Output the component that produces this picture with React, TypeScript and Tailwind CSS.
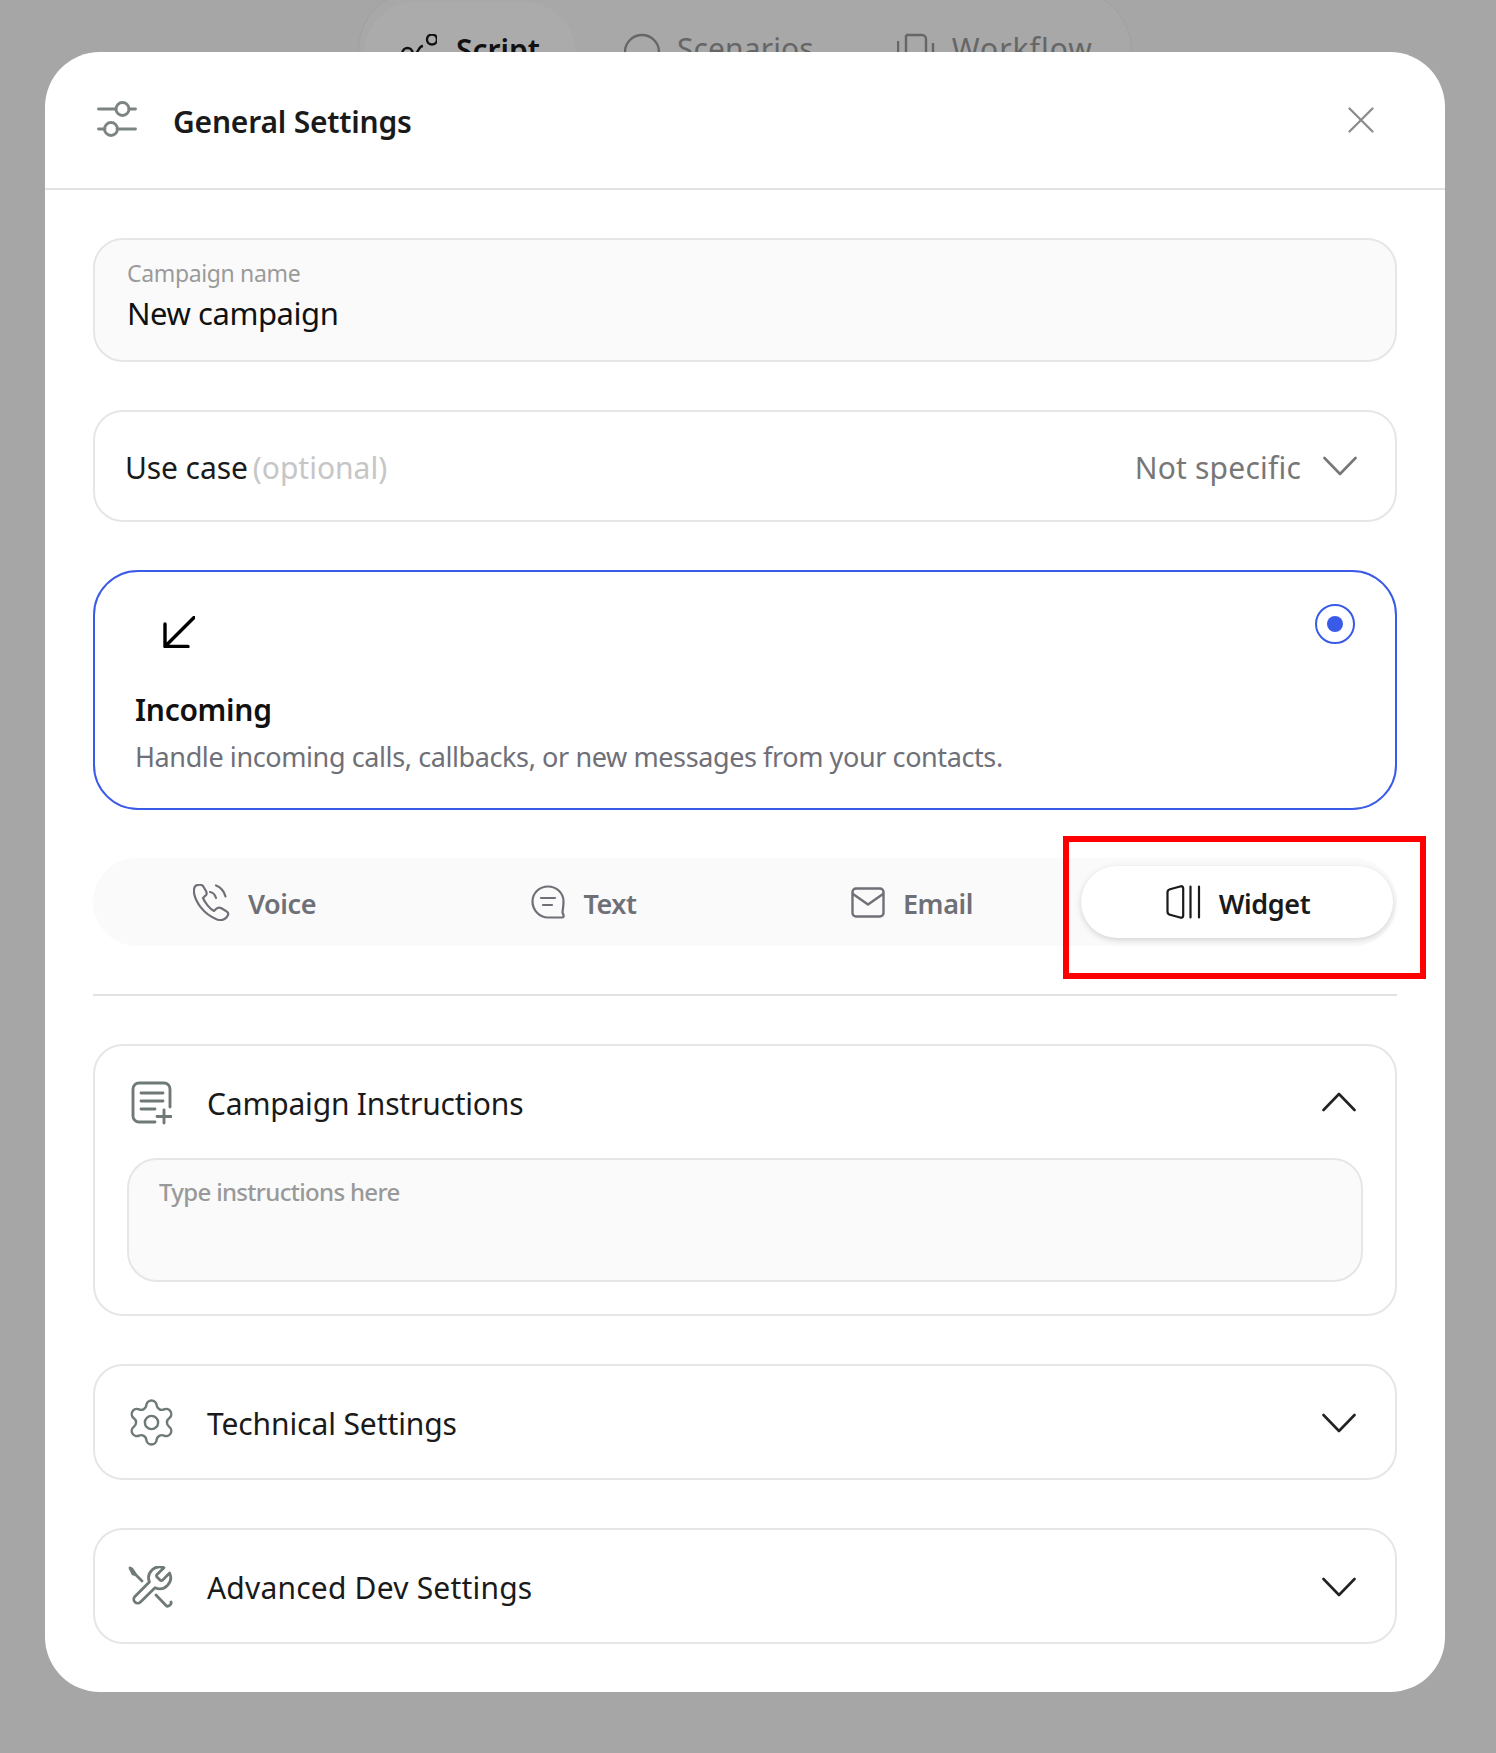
import React from "react";
import { Settings } from "lucide-react";

const Chevron = ({ up, color = "#222" }: { up?: boolean; color?: string }) => (
  <svg width="34" height="20" viewBox="0 0 34 20" fill="none" stroke={color} strokeWidth="2.6" strokeLinecap="round" strokeLinejoin="round">
    <polyline points={up ? "1.5,18 17,2 32.5,18" : "1.5,2 17,18 32.5,2"} />
  </svg>
);

const Row = ({ icon, label, textClass }: { icon: React.ReactNode; label: string; textClass: string }) => (
  <div className="flex h-[74px] items-center">
    <div className="flex w-[45px] shrink-0 justify-center">{icon}</div>
    <span className={"ml-[33px] flex-1 text-[30px] leading-[40px] text-[#1a1a1a] " + textClass}>{label}</span>
  </div>
);

function Tab({ icon, label, active, innerClass }: { icon: React.ReactNode; label: string; active?: boolean; innerClass: string }) {
  return (
    <div className={"flex flex-1 items-center justify-center rounded-full " + (active ? "bg-white shadow-[0_2px_6px_rgba(0,0,0,0.16)]" : "")}>
      <div className={"flex items-center gap-[18px] " + innerClass}>
        {icon}
        <span className={"mt-[4px] text-[27px] font-semibold tracking-[-0.4px] " + (active ? "text-[#1a1a1a]" : "text-[#6f6f78]")}>{label}</span>
      </div>
    </div>
  );
}

export default function App() {
  return (
    <div className="relative h-[1753px] w-full overflow-hidden bg-[#a6a6a6] font-['Noto_Sans',sans-serif]">
      {/* page behind the dialog */}
      <div className="ml-[358px] -mt-[10px] flex h-[130px] w-[774px] items-start rounded-[60px] border-[1.5px] border-[#a0a0a0] bg-[#a8a8a8] p-[6px] pt-[11px]">
        <div className="flex h-[100px] w-[210px] shrink-0 items-start gap-[19px] rounded-[50px] bg-[#ababab] pl-[36px] pt-[32px]">
          <svg width="36" height="30" viewBox="0 0 36 30" fill="none" stroke="#111" strokeWidth="2.4" className="shrink-0">
            <circle cx="31" cy="5.5" r="5" />
            <circle cx="6.500" cy="19" r="5" />
            <path d="M22 12c-5 0-4 7-8 8 4 1 3 8 8 8" />
          </svg>
          <span className="mt-[-4px] text-[30px] font-semibold leading-[40px] tracking-[0px] text-[#111]">Script</span>
        </div>
        <div className="ml-[49px] flex shrink-0 items-start gap-[13px] pt-[30px]">
          <svg width="40" height="40" viewBox="0 0 40 40" fill="none" stroke="#666" strokeWidth="2.4" className="shrink-0">
            <circle cx="18" cy="20" r="17" />
          </svg>
          <span className="mt-[-3px] text-[30px] leading-[40px] tracking-[0.1px] text-[#666]">Scenarios</span>
        </div>
        <div className="ml-[83px] flex shrink-0 items-start gap-[17px] pt-[31px]">
          <svg width="38" height="40" viewBox="0 0 38 40" fill="none" stroke="#666" strokeWidth="2.4" className="shrink-0">
            <path d="M1 8v30M9 2h16a4 4 0 0 1 4 4v32M9 2v36M36 10v28" />
          </svg>
          <span className="mt-[-4px] text-[30px] leading-[40px] tracking-[1px] text-[#666]">Workflow</span>
        </div>
      </div>

      {/* dialog */}
      <div className="absolute left-[45px] top-[52px] h-[1640px] w-[1400px] overflow-hidden rounded-[55px] bg-white">
        <div className="flex h-[138px] items-center border-b-[2px] border-[#e2e2e2] pl-[52px] pr-[71px] pb-[2px]">
          <svg width="40" height="36" viewBox="0 0 40 36" fill="none" stroke="#7c8580" strokeWidth="2.9" strokeLinecap="round">
            <path d="M1.5 8H19M32 8h6.5M1.5 28H8M20 28h18.5" />
            <circle cx="25.5" cy="8" r="6.5" />
            <circle cx="14" cy="28" r="6.5" />
          </svg>
          <span className="ml-[36px] mt-[5px] flex-1 text-[30px] font-semibold leading-[40px] tracking-[-0.2px] text-[#1a1a1a]">General Settings</span>
          <svg width="26" height="26" viewBox="0 0 26 26" fill="none" stroke="#8a8a8a" strokeWidth="2.2" strokeLinecap="round" className="mt-[2px]">
            <path d="M1.5 1.5l23 23M24.5 1.5l-23 23" />
          </svg>
        </div>

        <div className="flex flex-col gap-[49px] px-[48px] pt-[48px]">
          <div className="flex h-[124px] flex-col rounded-[30px] border-[2px] border-[#e6e6e6] bg-[#fafafa] pl-[32px] pt-[17px]">
            <span className="text-[23px] leading-[32px] tracking-[-0.35px] text-[#9a9a9a]">Campaign name</span>
            <span className="mt-[4px] text-[31px] leading-[40px] tracking-[-0.45px] text-[#111]">New campaign</span>
          </div>

          <div className="-mt-[1px] flex h-[112px] items-center rounded-[30px] border-[2px] border-[#e6e6e6] pl-[30px] pr-[38px]">
            <span className="mt-[2px] text-[30px] tracking-[-0.1px] text-[#1a1a1a]">Use case</span>
            <span className="ml-[5px] mt-[2px] flex-1 text-[30px] tracking-[0px] text-[#c6c6c6]">(optional)</span>
            <span className="mr-[22px] mt-[2px] text-[30px] tracking-[0.2px] text-[#777]">Not specific</span>
            <Chevron color="#777" />
          </div>

          <div className="relative -mt-[1px] h-[240px] rounded-[45px] border-[2px] border-[#3a5ae8] pl-[40px]">
            <svg width="32" height="32" viewBox="0 0 32 32" fill="none" stroke="#000" strokeWidth="3.4" strokeLinecap="round" strokeLinejoin="round" className="ml-[28px] mt-[44px]">
              <path d="M31 1.5L2 30.5M2 8v22.5h23" />
            </svg>
            <div className="mt-[41px] text-[30px] font-semibold leading-[42px] tracking-[-0.3px] text-[#111]">Incoming</div>
            <div className="mt-[7px] text-[27px] leading-[38px] tracking-[-0.4px] text-[#6f6f78]">Handle incoming calls, callbacks, or new messages from your contacts.</div>
            <div className="absolute right-[40px] top-[32px] flex h-[40px] w-[40px] items-center justify-center rounded-full border-[2.5px] border-[#3a5ae8]">
              <div className="h-[16px] w-[16px] rounded-full bg-[#3a5ae8]" />
            </div>
          </div>

          <div className="relative -mt-[1px] flex h-[88px] gap-[16px] rounded-full bg-[#fafafa] px-[4px] py-[8px]">
            <Tab
              innerClass="pl-[3px]"
              label="Voice"
              icon={
                <svg width="37" height="37" viewBox="0 0 37 37" fill="none" stroke="#6f6f78" strokeWidth="2.2" strokeLinecap="round" strokeLinejoin="round">
                  <path d="M3 1.5C1 2.5.5 5 1.2 10 3 18 10 30 24 35.5c5 1.5 9-.5 11-4.500.8-2 0-3-2-4l-5-3c-2-1-3-1-5 1l-2 2c-4-2-9-8-11-13l2-2c2-1 2-3 1-5l-3-5C8.500.5 5.500.5 3 1.500z" />
                  <path d="M17 8c3 .5 5 2.500 6 6M23 1.500c4 1.500 8 5.500 9.500 11" />
                </svg>
              }
            />
            <Tab
              innerClass="pl-[6px]"
              label="Text"
              icon={
                <svg width="34" height="34" viewBox="0 0 34 34" fill="none" stroke="#6f6f78" strokeWidth="2.2" strokeLinecap="round" strokeLinejoin="round">
                  <path d="M17 1.500C8.500 1.500 1.500 8 1.500 16.500S8.500 32.500 17 32.500h14c1.500 0 2-1 1.500-2.500l-1-2.500c.3-2.500 1-7 1-11C32.500 8 25.500 1.500 17 1.500z" />
                  <path d="M10 13h14M12 20h9" />
                </svg>
              }
            />
            <Tab
              innerClass="pl-[6px]"
              label="Email"
              icon={
                <svg width="34" height="31" viewBox="0 0 34 31" fill="none" stroke="#6f6f78" strokeWidth="2.4" strokeLinecap="round" strokeLinejoin="round">
                  <rect x="1.500" y="1.500" width="31" height="28" rx="3.500" />
                  <path d="M2 7l15 10.500L32 7" />
                </svg>
              }
            />
            <Tab
              active
              innerClass="pl-[2px]"
              label="Widget"
              icon={
                <svg width="35" height="34" viewBox="0 0 35 34" fill="none" stroke="#1a1a1a" strokeWidth="2.200" strokeLinecap="round" strokeLinejoin="round">
                  <path d="M15 1.200L4 4.200Q1.500 5 1.500 7.200v19.600q0 2.200 2.500 3L15 32.800q2.200 0 2.200-2.200V3.400Q17.200 1.200 15 1.200z" />
                  <path d="M24.500 1.500v31M33 1.500v31" />
                </svg>
              }
            />
            <div className="pointer-events-none absolute -right-[29px] -top-[22px] h-[143px] w-[363px] border-[6px] border-[#ff0000]" />
          </div>

          <div className="h-[2px] -mt-[1px] -mb-[1px] bg-[#e2e2e2]" />

          <div className="h-[272px] rounded-[30px] border-[2px] border-[#e6e6e6] px-[34px] pt-[20px]">
            <div className="relative">
              <Row
                textClass="mt-[2px] tracking-[-0.2px]"
                label="Campaign Instructions"
                icon={
                  <svg width="41" height="44" viewBox="0 0 41 44" fill="none" stroke="#6f7a75" strokeWidth="2.900" strokeLinecap="round" strokeLinejoin="round" className="shrink-0">
                    <path d="M39 26V8a6 6 0 0 0-6-6H8a6 6 0 0 0-6 6v27a6 6 0 0 0 6 6h16" />
                    <path d="M10 12h22M10 20h22M10 28h14M33 29v13M26 35.500h14" />
                  </svg>
                }
              />
              <div className="absolute right-[5px] top-[26px]">
                <Chevron up />
              </div>
            </div>
            <div className="-mx-[2px] mt-[18px] h-[124px] rounded-[30px] border-[2px] border-[#e6e6e6] bg-[#fafafa] pl-[30px] pt-[14px]">
              <span className="text-[24px] font-medium tracking-[-0.68px] text-[#999]">Type instructions here</span>
            </div>
          </div>

          <div className="relative -mt-[1px] h-[116px] rounded-[30px] border-[2px] border-[#e6e6e6] px-[34px] pt-[19px]">
            <Row textClass="mt-[3px] tracking-[-0.1px]" label="Technical Settings" icon={<Settings size={53} strokeWidth={1.1} color="#6f7a75" className="shrink-0" />} />
            <div className="absolute right-[39px] top-[47px]">
              <Chevron />
            </div>
          </div>

          <div className="relative -mt-[1px] h-[116px] rounded-[30px] border-[2px] border-[#e6e6e6] px-[34px] pt-[19px]">
            <Row
              textClass="mt-[3px] tracking-[0.2px]"
              label="Advanced Dev Settings"
              icon={
                <svg width="45" height="44" viewBox="0 0 45 44" fill="none" stroke="#6f7a75" strokeWidth="2.800" strokeLinecap="round" strokeLinejoin="round" className="mt-[3px] shrink-0 -ml-[2px]">
                  <path d="M2 2l3 6 3 1-4-6zM7 8l7 7" />
                  <path d="M28 29l10 10.500c2 2 6-1 5-3.500M39 41" />
                  <path d="M29 7.500a1.800 1.800 0 0 0 0 2.600l3 3a1.800 1.800 0 0 0 2.600 0l7-7a11 11 0 0 1-14.600 14.600L12.500 35a4 4 0 0 1-5.600 0 4 4 0 0 1 0-5.600l14.500-14.500A11 11 0 0 1 36 .800z" transform="translate(0 1)" />
                </svg>
              }
            />
            <div className="absolute right-[39px] top-[47px]">
              <Chevron />
            </div>
          </div>
        </div>
      </div>
    </div>
  );
}
